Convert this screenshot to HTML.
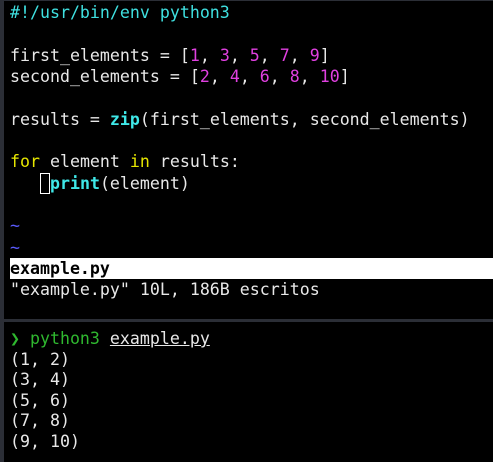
<!DOCTYPE html>
<html><head><style>
html,body{margin:0;padding:0;background:#000;width:493px;height:462px;overflow:hidden}
body{position:relative;font-family:"DejaVu Sans Mono","Liberation Mono",monospace;font-size:16.6px;color:#e8e8e8}
.fl{position:absolute;left:0;top:0;width:4px;height:462px;background:#2b2e36}
.ft{position:absolute;left:0;top:0;width:493px;height:1px;background:#2b2e36}
.sep{position:absolute;left:0;top:319px;width:493px;height:3px;background:#2b2e36}
.ed{position:absolute;left:10px;top:2px;right:0}
.l{height:21.33px;line-height:21.33px;white-space:pre}
.term{position:absolute;left:10px;top:329px}
.t{height:20.6px;line-height:20.6px;white-space:pre}
.c{color:#3fe0e0}.n{color:#e040e0}.b{color:#3fe8e8;font-weight:bold}.y{color:#e6e600}.tl{color:#5b5bff}
.bar{background:#fff;color:#000;font-weight:bold}
.cur{display:inline-block;width:8px;height:19px;border:1px solid #fff;vertical-align:-5px;margin-right:0px}
.g{color:#2fb82f}.u{text-decoration:underline}
</style></head><body>
<div class="ft"></div><div class="fl"></div>
<div class="ed">
<div class="l c">#!/usr/bin/env python3</div>
<div class="l"> </div>
<div class="l">first_elements = [<span class="n">1</span>, <span class="n">3</span>, <span class="n">5</span>, <span class="n">7</span>, <span class="n">9</span>]</div>
<div class="l">second_elements = [<span class="n">2</span>, <span class="n">4</span>, <span class="n">6</span>, <span class="n">8</span>, <span class="n">10</span>]</div>
<div class="l"> </div>
<div class="l">results = <span class="b">zip</span>(first_elements, second_elements)</div>
<div class="l"> </div>
<div class="l"><span class="y">for</span> element <span class="y">in</span> results:</div>
<div class="l">   <span class="cur"></span><span class="b">print</span>(element)</div>
<div class="l"> </div>
<div class="l tl">~</div>
<div class="l tl">~</div>
<div class="l bar">example.py</div>
<div class="l">"example.py" 10L, 186B escritos</div>
</div>
<div class="sep"></div>
<div class="term">
<div class="t"><span class="g">❯ python3</span> <span class="u">example.py</span></div>
<div class="t">(1, 2)</div>
<div class="t">(3, 4)</div>
<div class="t">(5, 6)</div>
<div class="t">(7, 8)</div>
<div class="t">(9, 10)</div>
</div>
</body></html>
